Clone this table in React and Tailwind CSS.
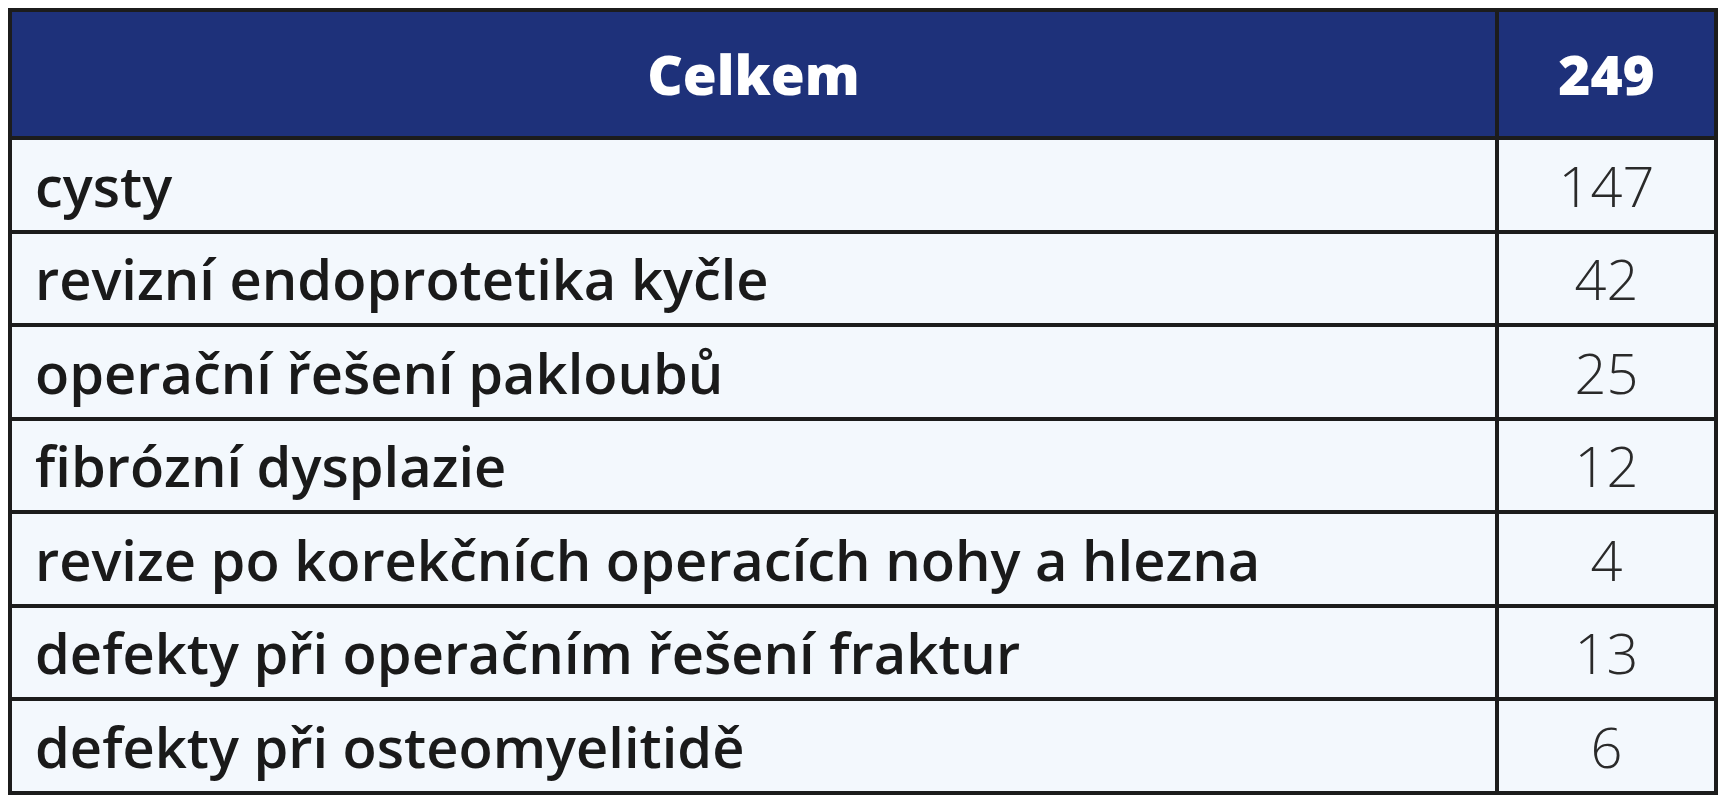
import React from 'react';

const rows = [
  { label: 'cysty', value: 147 },
  { label: 'revizní endoprotetika kyčle', value: 42 },
  { label: 'operační řešení pakloubů', value: 25 },
  { label: 'fibrózní dysplazie', value: 12 },
  { label: 'revize po korekčních operacích nohy a hlezna', value: 4 },
  { label: 'defekty při operačním řešení fraktur', value: 13 },
  { label: 'defekty při osteomyelitidě', value: 6 },
];

function App() {
  return (
    <div className="min-h-screen bg-white pt-[8px] pl-[8px]">
      <div className="w-[1710px] border-[4px] border-[#1c1c1c] bg-[#f3f8fd] text-[#1a1a1a] font-['Open_Sans',sans-serif]">
        {/* Header */}
        <div className="flex h-[124px] bg-[#1e317a] text-white font-extrabold">
          <div className="flex-1 flex items-center justify-center text-[55px]">Celkem</div>
          <div className="w-[219px] border-l-[4px] border-[#1c1c1c] flex items-center justify-center text-[55px]">
            249
          </div>
        </div>

        {rows.map((row) => (
          <div key={row.label} className="flex h-[93.5px] border-t-[4px] border-[#1c1c1c]">
            <div className="flex-1 flex items-center pl-[23px] text-[56px] font-semibold">
              {row.label}
            </div>
            <div className="w-[219px] border-l-[4px] border-[#1c1c1c] flex items-center justify-center text-[56px] font-light text-[#2a2a2a]">
              {row.value}
            </div>
          </div>
        ))}
      </div>
    </div>
  );
}

export default App;
